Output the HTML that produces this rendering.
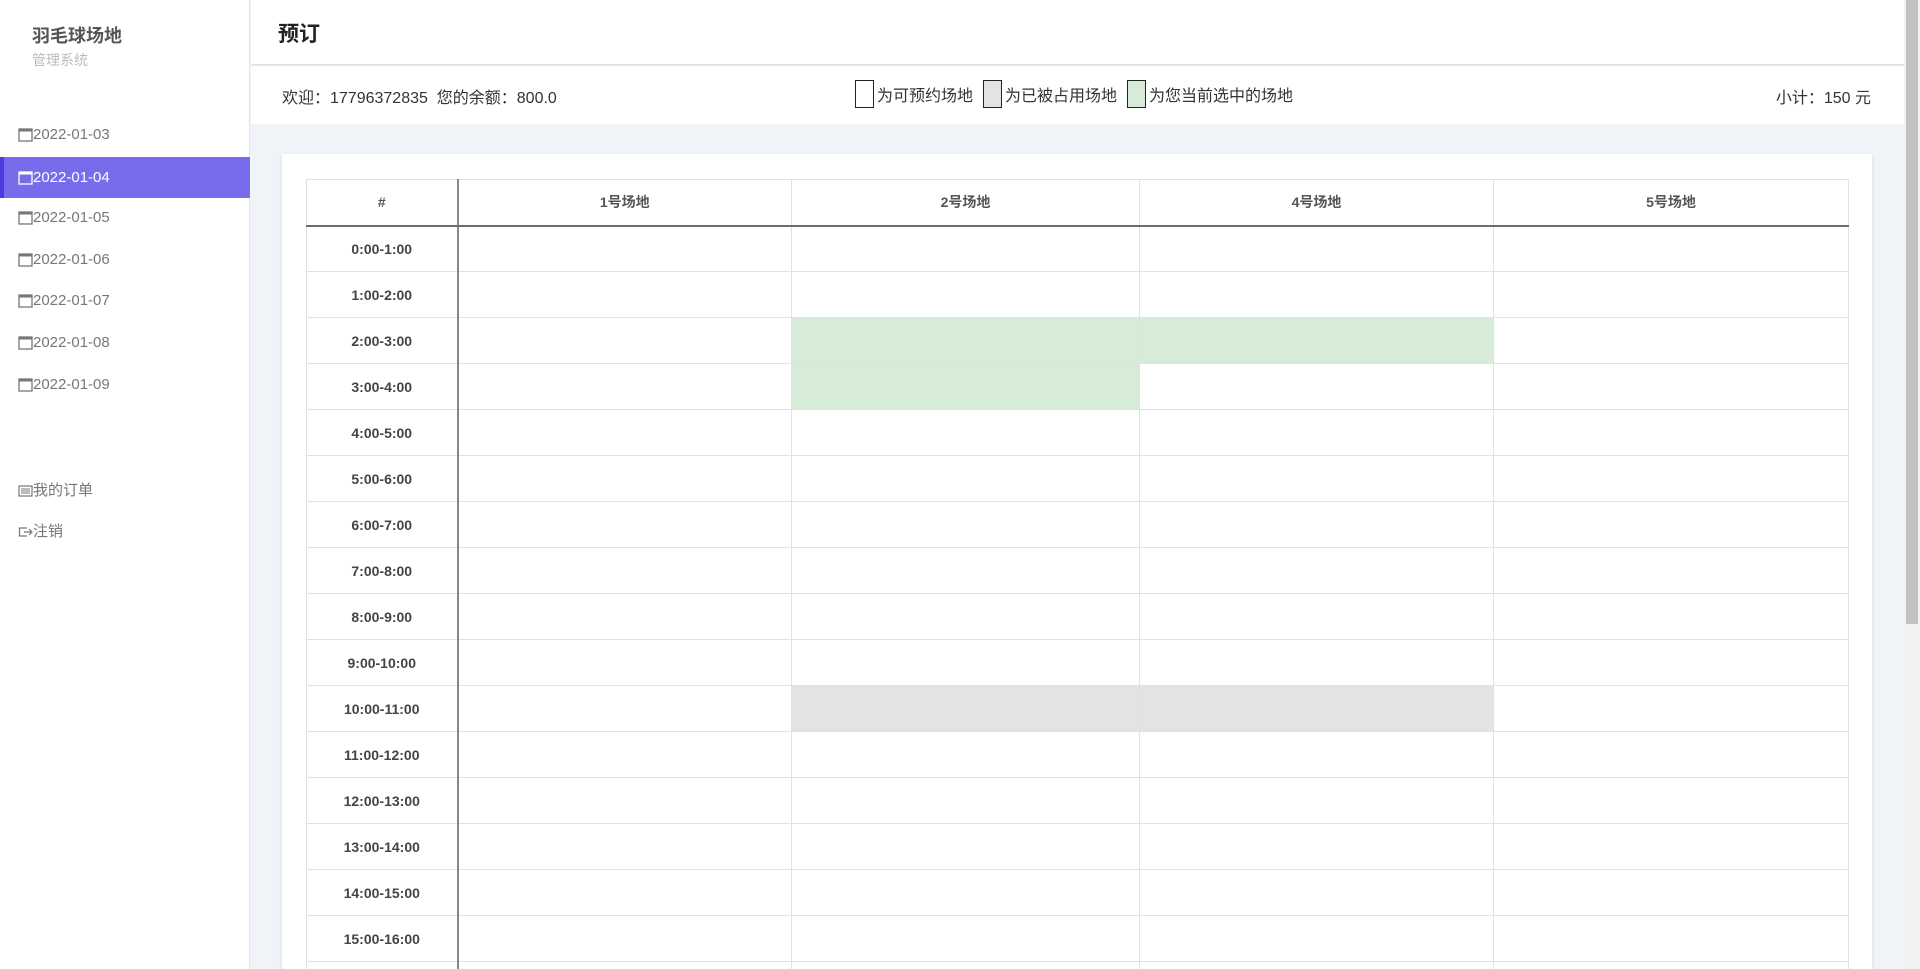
<!DOCTYPE html>
<html><head><meta charset="utf-8"><style>
*{box-sizing:border-box;margin:0;padding:0}
html,body{width:1920px;height:969px;overflow:hidden}
body{font-family:"Liberation Sans","Noto Sans CJK SC",sans-serif;background:#f0f4f8;position:relative}
.side{position:absolute;left:0;top:0;width:250px;height:969px;background:#fff;border-right:1px solid #e4e6ea}
.brand{position:absolute;left:32px;top:22px;font-size:18px;font-weight:bold;color:#555}
.sub{position:absolute;left:32px;top:50px;font-size:14px;color:#bbb}
.item{position:absolute;left:0;width:250px;height:41px;line-height:41px;padding-left:18px;font-size:15px;color:#777;display:flex;align-items:center}
.item.sel{background:#786cec;color:#fff;border-left:4px solid #4a3ce0;padding-left:14px}
.main{position:absolute;left:251px;top:0;width:1653px;height:969px;overflow:hidden}
.hdr{height:64px;background:#fff;box-shadow:0 1px 3px rgba(0,0,0,.12);position:relative}
.hdr h1{position:absolute;left:27px;top:18px;font-size:21px;font-weight:bold;color:#222}
.info{height:58px;background:#fff;margin-top:2px;position:relative;font-size:16px;color:#333}
.info .l{position:absolute;left:31px;top:18px}
.info .r{position:absolute;right:33px;top:18px}
.leg{position:absolute;left:604px;top:14px;display:flex;align-items:center}
.leg i{display:inline-block;width:19px;height:28px;border:1px solid #222;margin-right:3px}
.leg span{margin-right:10px}
.card{position:absolute;left:31px;top:154px;width:1590px;height:815px;background:#fff;box-shadow:0 1px 4px rgba(0,0,0,.1);overflow:hidden}
table{position:absolute;left:24px;top:25px;border-collapse:collapse;width:1542px;table-layout:fixed}
td,th{border:1px solid #dee2e6;height:46px;font-size:14px;text-align:center;color:#555}
th{font-weight:bold;height:46px;border-bottom:2px solid #6c6c6c}
td:first-child{font-weight:bold;color:#444;border-right:2px solid #888}
th:first-child{border-right:2px solid #888}
.g{background:#d6ecd9}.k{background:#e2e3e5}
.sb{position:absolute;right:0;top:0;width:16px;height:969px;background:#f1f1f1}
.sb div{position:absolute;left:2px;top:0;width:12px;height:624px;background:#c1c1c1}
</style></head><body>
<div class="side">
<div class="brand">羽毛球场地</div>
<div class="sub">管理系统</div>
<div class="item" style="top:114px"><svg width="15" height="15" viewBox="0 0 15 15"><rect x="1" y="2" width="13" height="12" fill="none" stroke="currentColor" stroke-width="1.3"/><rect x="1" y="2" width="13" height="2.5" fill="currentColor"/></svg>2022-01-03</div>
<div class="item sel" style="top:157px"><svg width="15" height="15" viewBox="0 0 15 15"><rect x="1" y="2" width="13" height="12" fill="none" stroke="currentColor" stroke-width="1.3"/><rect x="1" y="2" width="13" height="2.5" fill="currentColor"/></svg>2022-01-04</div>
<div class="item" style="top:197px"><svg width="15" height="15" viewBox="0 0 15 15"><rect x="1" y="2" width="13" height="12" fill="none" stroke="currentColor" stroke-width="1.3"/><rect x="1" y="2" width="13" height="2.5" fill="currentColor"/></svg>2022-01-05</div>
<div class="item" style="top:239px"><svg width="15" height="15" viewBox="0 0 15 15"><rect x="1" y="2" width="13" height="12" fill="none" stroke="currentColor" stroke-width="1.3"/><rect x="1" y="2" width="13" height="2.5" fill="currentColor"/></svg>2022-01-06</div>
<div class="item" style="top:280px"><svg width="15" height="15" viewBox="0 0 15 15"><rect x="1" y="2" width="13" height="12" fill="none" stroke="currentColor" stroke-width="1.3"/><rect x="1" y="2" width="13" height="2.5" fill="currentColor"/></svg>2022-01-07</div>
<div class="item" style="top:322px"><svg width="15" height="15" viewBox="0 0 15 15"><rect x="1" y="2" width="13" height="12" fill="none" stroke="currentColor" stroke-width="1.3"/><rect x="1" y="2" width="13" height="2.5" fill="currentColor"/></svg>2022-01-08</div>
<div class="item" style="top:364px"><svg width="15" height="15" viewBox="0 0 15 15"><rect x="1" y="2" width="13" height="12" fill="none" stroke="currentColor" stroke-width="1.3"/><rect x="1" y="2" width="13" height="2.5" fill="currentColor"/></svg>2022-01-09</div>
<div class="item" style="top:470px"><svg width="15" height="15" viewBox="0 0 15 15"><rect x="1" y="3" width="13" height="10" fill="none" stroke="currentColor" stroke-width="1.2"/><path d="M3 6h9M3 8h9M3 10h9" stroke="currentColor"/></svg>我的订单</div>
<div class="item" style="top:511px"><svg width="15" height="15" viewBox="0 0 15 15"><path d="M9 4H1.5v8H9" fill="none" stroke="currentColor" stroke-width="1.2"/><path d="M6 8h8M11 5l3 3-3 3" fill="none" stroke="currentColor" stroke-width="1.2"/></svg>注销</div>
</div>
<div class="main">
<div class="hdr"><h1>预订</h1></div>
<div class="info"><div class="l">欢迎：17796372835&nbsp;&nbsp;您的余额：800.0</div>
<div class="leg"><i></i><span>为可预约场地</span><i style="background:#e2e3e5"></i><span>为已被占用场地</span><i style="background:#d6ecd9"></i><span>为您当前选中的场地</span></div>
<div class="r">小计：150 元</div></div>
<div class="card"><table>
<colgroup><col style="width:151px"><col style="width:334px"><col style="width:348px"><col style="width:354px"><col style="width:355px"></colgroup>
<tr><th>#</th><th>1号场地</th><th>2号场地</th><th>4号场地</th><th>5号场地</th></tr>
<tr><td>0:00-1:00</td><td></td><td></td><td></td><td></td></tr>
<tr><td>1:00-2:00</td><td></td><td></td><td></td><td></td></tr>
<tr><td>2:00-3:00</td><td></td><td class="g"></td><td class="g"></td><td></td></tr>
<tr><td>3:00-4:00</td><td></td><td class="g"></td><td></td><td></td></tr>
<tr><td>4:00-5:00</td><td></td><td></td><td></td><td></td></tr>
<tr><td>5:00-6:00</td><td></td><td></td><td></td><td></td></tr>
<tr><td>6:00-7:00</td><td></td><td></td><td></td><td></td></tr>
<tr><td>7:00-8:00</td><td></td><td></td><td></td><td></td></tr>
<tr><td>8:00-9:00</td><td></td><td></td><td></td><td></td></tr>
<tr><td>9:00-10:00</td><td></td><td></td><td></td><td></td></tr>
<tr><td>10:00-11:00</td><td></td><td class="k"></td><td class="k"></td><td></td></tr>
<tr><td>11:00-12:00</td><td></td><td></td><td></td><td></td></tr>
<tr><td>12:00-13:00</td><td></td><td></td><td></td><td></td></tr>
<tr><td>13:00-14:00</td><td></td><td></td><td></td><td></td></tr>
<tr><td>14:00-15:00</td><td></td><td></td><td></td><td></td></tr>
<tr><td>15:00-16:00</td><td></td><td></td><td></td><td></td></tr>
<tr><td>16:00-17:00</td><td></td><td></td><td></td><td></td></tr>
</table></div>
</div>
<div class="sb"><div></div></div>
</body></html>
